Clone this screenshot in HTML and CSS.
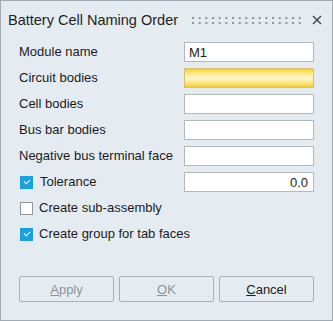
FILE: index.html
```html
<!DOCTYPE html>
<html lang="en">
<head>
    <meta charset="UTF-8">
    <title>Battery Cell Naming Order</title>
    <link rel="stylesheet" href="styles.css">
</head>
<body>

    <div class="dialog">
        <div class="titlebar">
            <span class="title">Battery Cell Naming Order</span>
            <svg class="grip" width="110" height="7" viewBox="0 0 110 7">
                <defs>
                    <pattern id="dots" x="0" y="0" width="6.67" height="5" patternUnits="userSpaceOnUse">
                        <rect x="0" y="0" width="2" height="2" fill="#8c939a"/>
                    </pattern>
                </defs>
                <rect x="0" y="0" width="110" height="7" fill="url(#dots)"/>
            </svg>
            <svg class="close" width="10" height="10" viewBox="0 0 10 10">
                <path d="M1 1 L9 9 M9 1 L1 9" stroke="#3a3f44" stroke-width="1.3" fill="none"/>
            </svg>
        </div>

        <div class="form">
            <label>Module name</label>
            <input type="text" class="field" value="M1">

            <label>Circuit bodies</label>
            <div class="field selector"></div>

            <label>Cell bodies</label>
            <input type="text" class="field">

            <label>Bus bar bodies</label>
            <input type="text" class="field">

            <label>Negative bus terminal face</label>
            <input type="text" class="field">

            <div class="check-row">
                <span class="box checked"></span>
                <span class="check-label tol">Tolerance</span>
            </div>
            <input type="text" class="field number" value="0.0">

            <div class="check-row wide">
                <span class="box"></span>
                <span class="check-label">Create sub-assembly</span>
            </div>

            <div class="check-row wide">
                <span class="box checked"></span>
                <span class="check-label">Create group for tab faces</span>
            </div>
        </div>

        <div class="buttons">
            <button class="disabled"><u>A</u>pply</button>
            <button class="disabled"><u>O</u>K</button>
            <button><u>C</u>ancel</button>
        </div>
    </div>

</body>
</html>
```

FILE: styles.css
```css
body {
    margin: 0;
    padding: 0;
    font-family: "Liberation Sans", Arial, sans-serif;
    background-color: #e5ecf1;
}

.dialog {
    width: 331px;
    height: 319px;
    border: 1px solid #a3abb3;
    background-color: #e5ecf1;
}

.titlebar {
    display: flex;
    align-items: center;
    height: 20px;
    padding: 9px 10px 0 7px;
}

.title {
    font-size: 14.5px;
    line-height: 20px;
    color: #1e1e1e;
}

.grip {
    margin-left: auto;
}

.close {
    margin-left: 10px;
}

.form {
    display: grid;
    grid-template-columns: 165px 130px;
    grid-auto-rows: 20px;
    row-gap: 6px;
    padding: 12px 18px 0 18px;
}

label, .check-label {
    font-size: 13px;
    line-height: 20px;
    color: #1b1b24;
    white-space: nowrap;
}

.field {
    box-sizing: border-box;
    width: 130px;
    height: 20px;
    margin: 0;
    padding: 0 4px;
    border: 1px solid #b3b8bd;
    background-color: #fff;
    font-family: "Liberation Sans", Arial, sans-serif;
    font-size: 13px;
    color: #1b1b24;
    outline: none;
}

.field.number {
    text-align: right;
    padding-right: 5px;
}

.selector {
    border-color: #d6c06a;
    background: linear-gradient(to bottom, #f5cf2a 0%, #fde98a 25%, #fff6cf 50%, #fde98a 75%, #f5cf2a 100%);
}

.check-row {
    display: flex;
    align-items: center;
}

.check-row.wide {
    grid-column: 1 / 3;
}

.box {
    box-sizing: border-box;
    width: 13px;
    height: 13px;
    margin-left: 1px;
    margin-right: 6px;
    border: 1px solid #8e959c;
    background-color: #fff;
    position: relative;
}

.box.checked {
    border-color: #1aa0e0;
    background-color: #1aa0e0;
}

.box.checked::after {
    content: "";
    position: absolute;
    left: 3px;
    top: 2px;
    width: 5px;
    height: 3px;
    border-left: 1.5px solid #fff;
    border-bottom: 1.5px solid #fff;
    transform: rotate(-45deg);
}

.check-label.tol {
    margin-left: 1px;
}

.buttons {
    display: flex;
    gap: 5px;
    padding: 32px 18px 0 18px;
}

button {
    box-sizing: border-box;
    width: 95px;
    height: 26px;
    border: 1px solid #aab0b6;
    border-radius: 2px;
    background-color: #e5ecf1;
    font-family: "Liberation Sans", Arial, sans-serif;
    font-size: 13px;
    color: #1b1b24;
    padding: 0;
}

button.disabled {
    color: #8d949a;
}
```
